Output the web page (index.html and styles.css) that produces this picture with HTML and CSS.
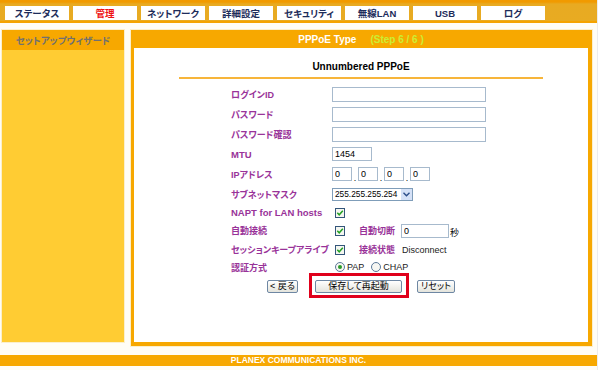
FILE: index.html
```html
<!DOCTYPE html>
<html lang="ja">
<head>
<meta charset="utf-8">
<title>PPPoE Type</title>
<link rel="stylesheet" href="styles.css">
</head>
<body>
<div class="page">
  <nav class="topbar">
    <a class="tab">ステータス</a>
    <a class="tab active">管理</a>
    <a class="tab">ネットワーク</a>
    <a class="tab">詳細設定</a>
    <a class="tab">セキュリティ</a>
    <a class="tab">無線LAN</a>
    <a class="tab">USB</a>
    <a class="tab">ログ</a>
  </nav>
  <div class="layout">
    <aside class="sidebar">
      <div class="side-head">セットアップウィザード</div>
    </aside>
    <main class="panel">
      <div class="panel-head"><span>PPPoE Type</span><span class="step">(Step 6 / 6 )</span></div>
      <div class="panel-body">
        <h1 class="title">Unnumbered PPPoE</h1>
        <div class="rule"></div>
        <div class="form">
          <div class="row r20"><span class="lbl">ログインID</span><input class="input w-long" type="text" value=""></div>
          <div class="row r20"><span class="lbl">パスワード</span><input class="input w-long" type="password" value=""></div>
          <div class="row r20"><span class="lbl">パスワード確認</span><input class="input w-long" type="password" value=""></div>
          <div class="row r20"><span class="lbl latin">MTU</span><input class="input w-mtu" type="text" value="1454"></div>
          <div class="row r20"><span class="lbl">IPアドレス</span>
            <input class="input ip" type="text" value="0"><span class="dot">.</span>
            <input class="input ip" type="text" value="0"><span class="dot">.</span>
            <input class="input ip" type="text" value="0"><span class="dot">.</span>
            <input class="input ip" type="text" value="0">
          </div>
          <div class="row r20"><span class="lbl">サブネットマスク</span>
            <div class="select"><span class="sel-text">255.255.255.254</span><span class="sel-btn"><svg width="7" height="5" viewBox="0 0 7 5"><path d="M0.5 0.8 L3.5 3.8 L6.5 0.8" fill="none" stroke="#2c4e8a" stroke-width="1.4"/></svg></span></div>
          </div>
          <div class="row r17"><span class="lbl latin">NAPT for LAN hosts</span>
            <span class="cb"><svg width="10" height="10" viewBox="0 0 10 10"><rect x="0.5" y="0.5" width="9" height="9" fill="#f4f6f0" stroke="#33557a"/><path d="M2.3 4.8 L4.2 6.8 L7.8 2.8" fill="none" stroke="#22a022" stroke-width="1.5"/></svg></span>
          </div>
          <div class="row r19"><span class="lbl">自動接続</span>
            <span class="cb"><svg width="10" height="10" viewBox="0 0 10 10"><rect x="0.5" y="0.5" width="9" height="9" fill="#f4f6f0" stroke="#33557a"/><path d="M2.3 4.8 L4.2 6.8 L7.8 2.8" fill="none" stroke="#22a022" stroke-width="1.5"/></svg></span>
            <span class="sublbl">自動切断</span><input class="input w-sec" type="text" value="0"><span class="unit">秒</span>
          </div>
          <div class="row r19"><span class="lbl">セッションキープアライブ</span>
            <span class="cb"><svg width="10" height="10" viewBox="0 0 10 10"><rect x="0.5" y="0.5" width="9" height="9" fill="#f4f6f0" stroke="#33557a"/><path d="M2.3 4.8 L4.2 6.8 L7.8 2.8" fill="none" stroke="#22a022" stroke-width="1.5"/></svg></span>
            <span class="sublbl">接続状態</span><span class="val">Disconnect</span>
          </div>
          <div class="row r16"><span class="lbl">認証方式</span>
            <span class="radio"><svg width="10" height="10" viewBox="0 0 10 10"><circle cx="5" cy="5" r="4.5" fill="#f6f6f2" stroke="#5a7898"/><circle cx="5" cy="5" r="2" fill="#2a9a2a"/></svg></span><span class="opt">PAP</span>
            <span class="radio r2"><svg width="10" height="10" viewBox="0 0 10 10"><circle cx="5" cy="5" r="4.5" fill="#f6f6f2" stroke="#5a7898"/></svg></span><span class="opt">CHAP</span>
          </div>
        </div>
        <div class="buttons">
          <button class="btn b-back">&lt; 戻る</button>
          <span class="highlight"><button class="btn b-save">保存して再起動</button></span>
          <button class="btn b-reset">リセット</button>
        </div>
      </div>
    </main>
  </div>
  <footer class="footer">PLANEX COMMUNICATIONS INC.</footer>
</div>
</body>
</html>
```
FILE: styles.css
```css
body {
  margin: 0;
  background: #ffffff;
  font-family: "Liberation Sans", "Noto Sans CJK JP", sans-serif;
  font-feature-settings: "palt";
}
.page {
  width: 597px;
  height: 370px;
  background: #fffdf6;
  border-right: 1px solid #ececec;
}
.topbar {
  display: flex;
  gap: 4px;
  height: 23px;
  box-sizing: border-box;
  padding: 6px 0 0 5px;
  background: linear-gradient(to bottom, #f19a00 0, #f19a00 2px, #e8aa22 4px, #e8ab22 21px, #f5a300 21px);
}
.tab {
  width: 64px;
  height: 14px;
  background: #ffffff;
  color: #1d2c5a;
  font-size: 9.5px;
  font-weight: bold;
  display: flex;
  align-items: center;
  justify-content: center;
  text-decoration: none;
}
.tab.active { color: #ee1111; }
.layout {
  display: flex;
  gap: 7px;
  padding: 7px 0 0 2px;
}
.sidebar {
  width: 122px;
  height: 312px;
  background: #ffcc33;
  box-shadow: 0 0 0 1px #fbefcc;
}
.side-head {
  height: 20px;
  background: #f7a800;
  color: #707070;
  font-size: 9.5px;
  font-weight: bold;
  display: flex;
  align-items: center;
  justify-content: center;
}
.panel {
  width: 461px;
  height: 316px;
  box-sizing: border-box;
  background: #f7a800;
  padding: 0 4px 4px 3px;
  display: flex;
  flex-direction: column;
  box-shadow: 0 0 0 1px #fbefcc;
}
.panel-head {
  height: 18px;
  display: flex;
  align-items: center;
  justify-content: center;
  gap: 14px;
  color: #ffffff;
  font-size: 10px;
  font-weight: bold;
}
.step { color: #ccee33; }
.panel-body {
  flex: 1;
  background: #ffffff;
  padding-top: 12px;
}
.title {
  margin: 0;
  font-size: 10px;
  font-weight: bold;
  line-height: 13px;
  text-align: center;
  color: #000000;
}
.rule {
  width: 364px;
  height: 2px;
  background: #f7b53a;
  margin: 4px auto 0;
}
.form { margin: 5px 0 0 97px; }
.row {
  display: flex;
  align-items: center;
  height: 20px;
}
.r17 { height: 17px; }
.r19 { height: 19px; }
.r16 { height: 16px; }
.lbl {
  width: 101px;
  flex: none;
  color: #993399;
  font-size: 9px;
  font-weight: bold;
  white-space: nowrap;
}
.lbl.latin { font-size: 9.5px; }
.input {
  box-sizing: border-box;
  height: 14px;
  margin: 0;
  padding: 0 2px;
  border: 1px solid #a7bacd;
  background: #ffffff;
  font-family: "Liberation Sans", sans-serif;
  font-size: 9px;
  color: #000000;
  outline: none;
}
.w-long { width: 154px; height: 15px; }
.w-mtu { width: 40px; }
.ip { width: 20px; }
.dot {
  width: 6px;
  text-align: center;
  font-size: 9px;
  align-self: flex-end;
  line-height: 12px;
}
.select {
  box-sizing: border-box;
  display: flex;
  width: 81px;
  height: 13px;
  border: 1px solid #7f9db9;
  background: #ffffff;
}
.sel-text {
  flex: 1;
  font-size: 8.3px;
  line-height: 11px;
  padding-left: 2px;
  white-space: nowrap;
  overflow: hidden;
}
.sel-btn {
  width: 11px;
  flex: none;
  background: #d5e1f7;
  display: flex;
  align-items: center;
  justify-content: center;
}
.cb, .radio {
  display: flex;
  margin-left: 3px;
}
.radio.r2 { margin-left: 7px; }
.sublbl {
  width: 42px;
  margin-left: 14px;
  color: #993399;
  font-size: 9px;
  font-weight: bold;
  white-space: nowrap;
}
.w-sec { width: 48px; }
.unit { font-size: 9px; margin-left: 1px; align-self: flex-end; line-height: 14px; }
.val { font-size: 9px; margin-left: 1px; color: #222; }
.opt { font-size: 9px; margin-left: 2px; color: #222; }
.buttons {
  display: flex;
  justify-content: center;
  align-items: flex-start;
  margin-top: -2px;
}
.btn {
  box-sizing: border-box;
  height: 13px;
  margin: 0;
  padding: 0;
  border: 1px solid #6e87a3;
  border-radius: 2px;
  background: linear-gradient(to bottom, #ffffff, #e4e4dc);
  font-family: "Liberation Sans", "Noto Sans CJK JP", sans-serif;
  font-feature-settings: "palt";
  font-size: 9px;
  line-height: 11px;
  color: #000000;
}
.b-back { width: 31px; margin: 7px 11px 0 0; }
.b-save { width: 87px; }
.b-reset { width: 38px; margin: 7px 0 0 8px; }
.highlight {
  display: flex;
  border: 3px solid #e0001b;
  padding: 4px 4px 2px 3px;
}
.footer {
  margin-top: 9px;
  height: 11px;
  background: #f7a800;
  color: #ffffff;
  font-size: 8.5px;
  font-weight: bold;
  line-height: 11px;
  text-align: center;
}
```
